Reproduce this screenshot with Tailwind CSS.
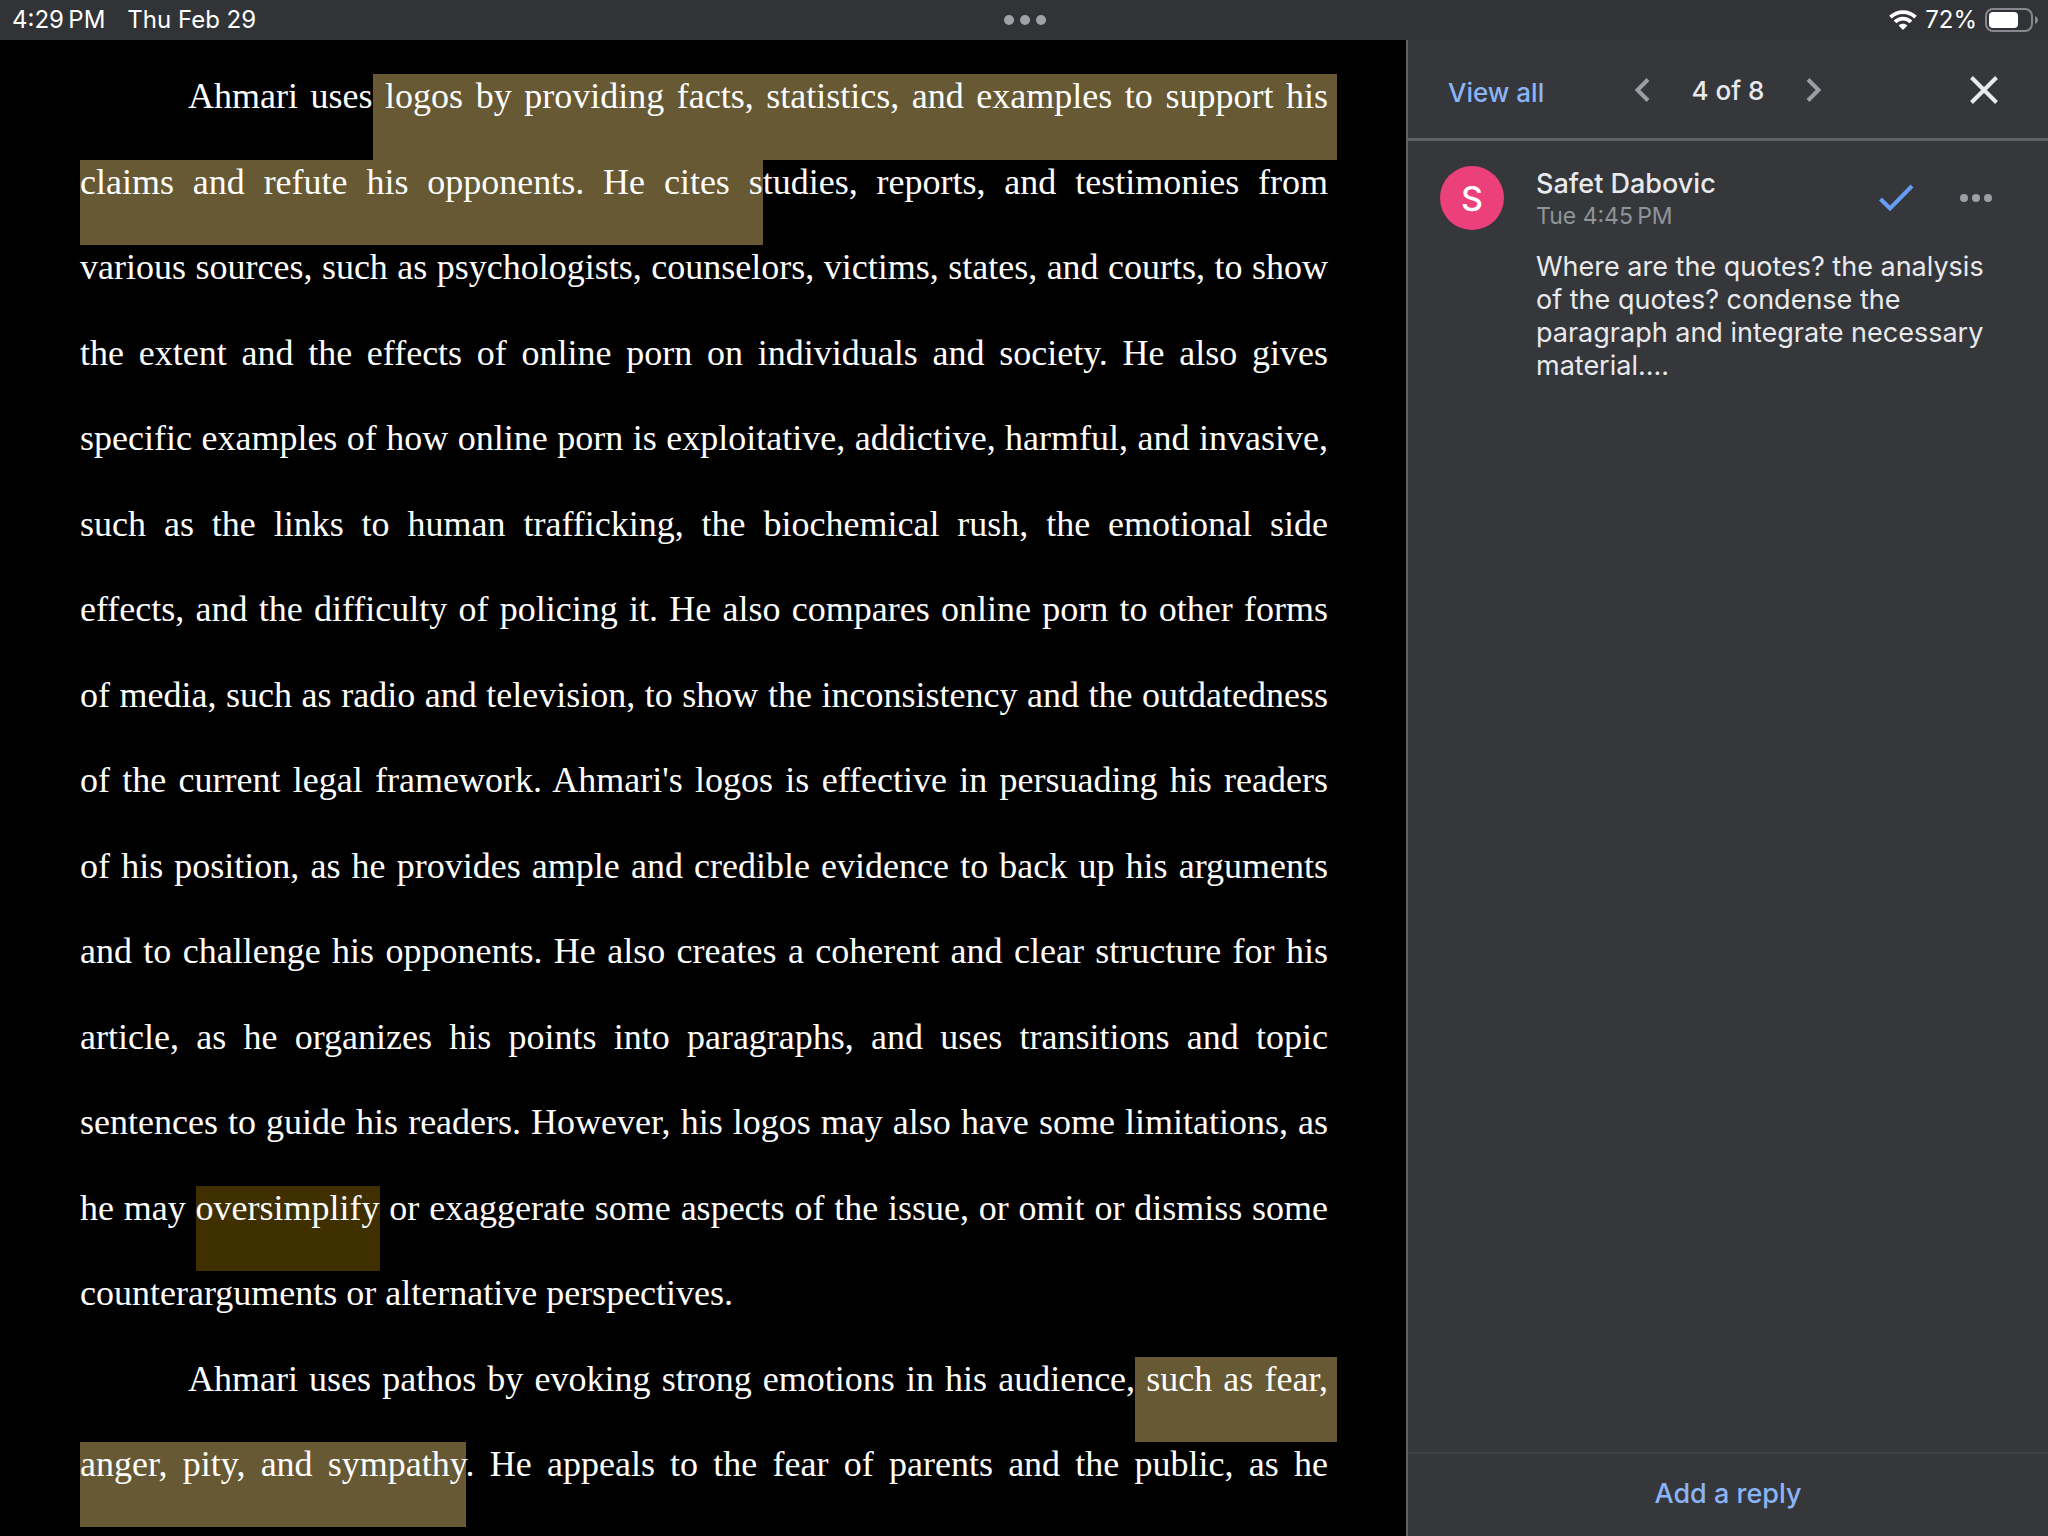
<!DOCTYPE html>
<html lang="en">
<head>
  <meta charset="UTF-8">
  <meta name="viewport" content="width=device-width, initial-scale=1.0">
  <title>Essay Draft - Comments</title>
  <script src="https://cdn.jsdelivr.net/npm/@tailwindcss/browser@4"></script>
</head>
<body class="bg-black font-['Inter',sans-serif]">
  <div class="h-screen flex flex-col overflow-hidden">
    <!-- Status bar -->
    <header class="h-10 shrink-0 grid grid-cols-3 items-center bg-[#323336] pl-3 pr-[9px] text-2xl text-white">
      <div class="flex items-center gap-[22px] whitespace-nowrap">
        <span>4:29&thinsp;PM</span>
        <span>Thu Feb 29</span>
      </div>
      <div class="flex justify-center gap-[6px]">
        <span class="size-[10px] rounded-full bg-[#a0a1a6]"></span>
        <span class="size-[10px] rounded-full bg-[#a0a1a6]"></span>
        <span class="size-[10px] rounded-full bg-[#a0a1a6]"></span>
      </div>
      <div class="flex items-center justify-end gap-2">
        <svg class="w-7 h-5" viewBox="0 0 28 20" fill="none" stroke="#fff" stroke-width="3.8">
          <path d="M1.5 7.2C8.4 0.3 19.6 0.3 26.5 7.2"/>
          <path d="M6 11.9C10.5 7.5 17.5 7.5 22 11.9"/>
          <path d="M14 20L9.6 15.5C12 13.2 16 13.2 18.4 15.5Z" fill="#fff" stroke="none"/>
        </svg>
        <span>72%</span>
        <svg class="w-[54px] h-6" viewBox="0 0 54 24" fill="none">
          <rect x="1" y="1" width="46" height="22" rx="7" stroke="#87888b" stroke-width="2"/>
          <rect x="4" y="4" width="29" height="16" rx="4" fill="#fff"/>
          <path d="M50 8C52 9 53 10.4 53 12C53 13.6 52 15 50 16Z" fill="#87888b"/>
        </svg>
      </div>
    </header>

    <div class="flex-1 min-h-0 flex">
      <!-- Document -->
      <main class="flex-1 min-w-0 overflow-hidden pl-20 pr-[78px] pt-[14px] font-['Liberation_Serif',serif] text-[36px] leading-[2.375] text-white text-justify">
        <p class="indent-[3em]">Ahmari uses<mark class="bg-[#665934] text-white pt-[2px] pb-[44px] shadow-[9px_0_0_#665934]"> logos by providing facts, statistics, and examples to support his</mark> <mark class="bg-[#665934] text-white pt-[2px] pb-[43px]">claims and refute his opponents. He cites s</mark>tudies, reports, and testimonies from various sources, such as psychologists, counselors, victims, states, and courts, to show the extent and the effects of online porn on individuals and society. He also gives specific examples of how online porn is exploitative, addictive, harmful, and invasive, such as the links to human trafficking, the biochemical rush, the emotional side effects, and the difficulty of policing it. He also compares online porn to other forms of media, such as radio and television, to show the inconsistency and the outdatedness of the current legal framework. Ahmari's logos is effective in persuading his readers of&nbsp;his position, as he provides ample and credible evidence to back up his arguments and to challenge his opponents. He also creates a coherent and clear structure for his article, as he organizes his points into paragraphs, and uses transitions and topic sentences to guide his readers. However, his logos may also have some limitations, as he may <mark class="bg-[#403000] text-white pt-[2px] pb-[43px]">oversimplify</mark> or exaggerate some aspects of the issue, or omit or dismiss some counterarguments or alternative perspectives.</p>
        <p class="indent-[3em] [text-align-last:justify]">Ahmari uses pathos by evoking strong emotions in his audience,<mark class="bg-[#665934] text-white pt-[2px] pb-[43px] shadow-[9px_0_0_#665934]"> such as fear,</mark> <mark class="bg-[#665934] text-white pt-[2px] pb-[43px]">anger, pity, and sympathy</mark>. He appeals to the fear of parents and the public, as he</p>
      </main>

      <!-- Comments panel -->
      <aside class="w-[642px] shrink-0 flex flex-col border-l-2 border-[#5f6165] bg-[#36373b] text-[#e8eaed]">
        <div class="h-[101px] shrink-0 grid grid-cols-[1fr_auto_1fr] items-center border-b-[3px] border-[#5f6165] pl-10 pr-[50px] pt-[2px] text-[26px] font-medium">
          <a href="#" class="mt-1 text-[#8ab4f8]">View all</a>
          <div class="flex items-center gap-[42px] pl-[10px]">
            <button type="button" aria-label="Previous comment">
              <svg class="w-4 h-6" viewBox="0 0 16 24" fill="none" stroke="#9aa0a6" stroke-width="4">
                <path d="M14 1.5L3.5 12L14 22.5"/>
              </svg>
            </button>
            <span>4 of 8</span>
            <button type="button" aria-label="Next comment">
              <svg class="w-4 h-6" viewBox="0 0 16 24" fill="none" stroke="#9aa0a6" stroke-width="4">
                <path d="M2 1.5L12.5 12L2 22.5"/>
              </svg>
            </button>
          </div>
          <button type="button" aria-label="Close comments" class="justify-self-end">
            <svg class="size-7" viewBox="0 0 28 28" fill="none" stroke="#e8eaed" stroke-width="4">
              <path d="M1.5 1.5L26.5 26.5M26.5 1.5L1.5 26.5"/>
            </svg>
          </button>
        </div>

        <article class="flex-1 pl-8 pr-14 pt-[25px]">
          <div class="flex items-center">
            <div class="size-16 shrink-0 rounded-full bg-[#ec407a] flex items-center justify-center text-[34px] font-medium text-white">S</div>
            <div class="ml-8 flex-1">
              <h2 class="text-[27px] leading-9 font-medium">Safet Dabovic</h2>
              <p class="text-[23px] leading-7 text-[#8f9499]">Tue 4:45&thinsp;PM</p>
            </div>
            <button type="button" aria-label="Resolve comment">
              <svg class="w-[35px] h-7" viewBox="0 0 35 28" fill="none" stroke="#669df6" stroke-width="4">
                <path d="M1.5 15L11 24.5L33 2"/>
              </svg>
            </button>
            <button type="button" aria-label="More options" class="ml-[46px]">
              <svg class="w-8 h-2" viewBox="0 0 32 8" fill="#9aa0a6">
                <circle cx="4" cy="4" r="4"/>
                <circle cx="16" cy="4" r="4"/>
                <circle cx="28" cy="4" r="4"/>
              </svg>
            </button>
          </div>
          <p class="ml-24 mt-5 text-[27px] leading-[33px]">Where are the quotes? the analysis of the quotes? condense the paragraph and integrate necessary material....</p>
        </article>

        <button type="button" class="h-[84px] shrink-0 border-t-2 border-[#3f4145] pb-[2px] text-[27px] font-medium text-[#8ab4f8]">Add a reply</button>
      </aside>
    </div>
  </div>
</body>
</html>
